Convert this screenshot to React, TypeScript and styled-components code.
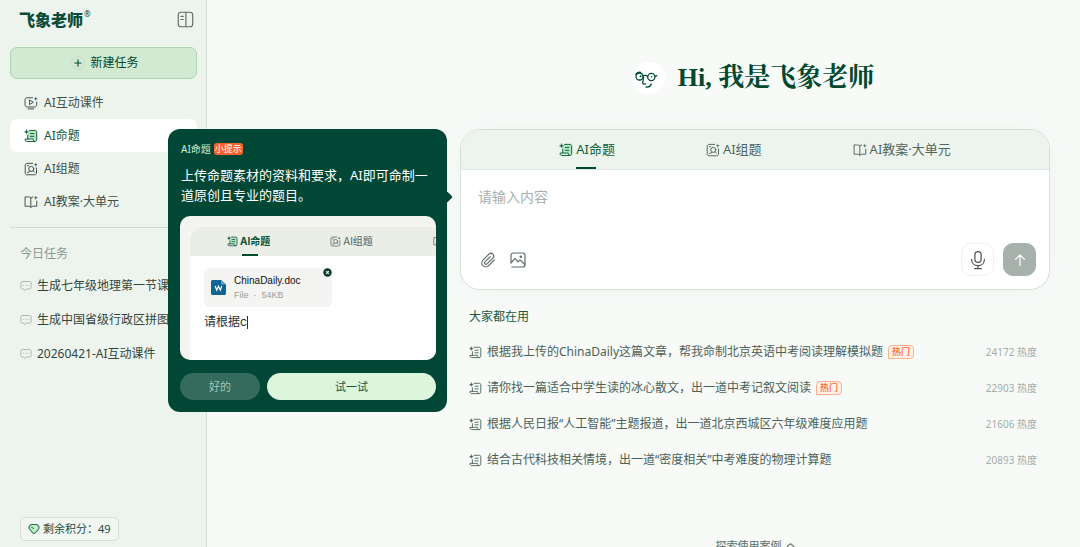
import React from "react";
import styled, { createGlobalStyle, css } from "styled-components";

const sans = `"Noto Sans", "Noto Sans CJK SC", sans-serif`;
const green = "#00492f";

const GlobalStyle = createGlobalStyle`
  *, *::before, *::after { box-sizing: border-box; }
  body {
    margin: 0;
    font-family: ${sans};
    font-size: 12px;
    line-height: 16px;
    color: #3d4f48;
    background: #f8faf8;
  }
  button, textarea { font: inherit; color: inherit; margin: 0; padding: 0; border: 0; background: none; }
  button { cursor: pointer; }
  a { color: inherit; text-decoration: none; }
  ul { list-style: none; margin: 0; padding: 0; }
  h1, h2, p { margin: 0; font-weight: 400; }
  svg { display: block; flex: none; }
`;

const Page = styled.div`
  position: relative;
  display: flex;
  height: 100vh;
  overflow: hidden;
`;

/* ---------- sidebar ---------- */

const Sidebar = styled.aside`
  flex: none;
  display: flex;
  flex-direction: column;
  width: 207px;
  padding: 0 9px 6px 10px;
  background: #edf4ee;
  border-right: 1px solid #d3ddd6;
`;

const Brand = styled.div`
  display: flex;
  align-items: center;
  justify-content: space-between;
  height: 47px;
  padding: 0 3px 8px 9px;
  color: #0b4c3a;
`;

const BrandName = styled.span`
  display: flex;
  font-size: 16px;
  font-weight: 900;
  line-height: 24px;

  sup {
    font-size: 8px;
    font-weight: 400;
    line-height: 12px;
    margin-left: 1px;
  }
`;

const IconButton = styled.button`
  display: flex;
  color: #5f6f68;
`;

const NewTask = styled.button`
  display: flex;
  align-items: center;
  justify-content: center;
  gap: 5px;
  height: 32px;
  margin-bottom: 7px;
  padding-left: 3px;
  border: 1px solid #afd2b5;
  border-radius: 7px;
  background: #d3ead2;
  color: ${green};
`;

const PlusRing = styled.span`
  display: flex;
  padding: 1px;
  border: 1px solid #c6e0c6;
  border-radius: 50%;
`;

const NavItem = styled.a<{ $active?: boolean }>`
  display: flex;
  align-items: center;
  gap: 6px;
  height: 33px;
  padding-left: 14px;
  border-radius: 7px;
  color: #3d4f48;
  ${(p) => p.$active && css`background: #fff; color: #0b5a3c;`}
`;

const Rule = styled.hr`
  width: 100%;
  height: 1px;
  margin: 9px 0 18px;
  border: 0;
  background: #d0d9d3;
`;

const TaskHeading = styled.h2`
  padding-left: 10px;
  margin-bottom: 7px;
  font-size: 12px;
  color: #8a9a93;
`;

const TaskItem = styled.a`
  display: flex;
  align-items: center;
  gap: 5px;
  height: 34px;
  padding-left: 10px;
  white-space: nowrap;
  overflow: hidden;
  color: #33463e;

  svg { color: #a9b7b0; }
`;

const Credits = styled.a`
  display: flex;
  align-items: center;
  align-self: flex-start;
  gap: 3px;
  height: 24px;
  margin: auto 0 0 10px;
  padding: 0 7px;
  border: 1px solid #d5dfd8;
  border-radius: 5px;
  background: #f1f6f2;
  font-size: 11px;
  color: #1f4c3e;
`;

/* ---------- main column ---------- */

const Main = styled.main`
  flex: 1;
  min-width: 0;
  display: flex;
  flex-direction: column;
  padding: 60px 30px 0 253px;
`;

const Greeting = styled.div`
  flex: none;
  display: flex;
  align-items: center;
  justify-content: center;
  gap: 13px;
  height: 36px;
  margin-bottom: 33px;
  padding-right: 3px;
`;

const Avatar = styled.span`
  display: flex;
  border-radius: 50%;
  background: #fff;
  color: ${green};
`;

const Title = styled.h1`
  font-family: "Liberation Serif", "Noto Serif CJK SC", "Noto Sans CJK SC", serif;
  font-size: 26px;
  line-height: 36px;
  font-weight: 700;
  color: ${green};
`;

const Composer = styled.section`
  flex: none;
  display: flex;
  flex-direction: column;
  border: 1px solid #d6e1d9;
  border-radius: 20px;
  background: #fff;
  overflow: hidden;
  box-shadow: 0 0 20px #eef5f0;
`;

const TabBar = styled.div`
  display: flex;
  justify-content: center;
  gap: 91px;
  height: 40px;
  border-bottom: 1px solid #dfe7e1;
  background: #edf4ee;
`;

const Tab = styled.button<{ $active?: boolean }>`
  display: flex;
  align-items: center;
  gap: 3px;
  font-size: 13px;
  color: ${(p) => (p.$active ? "#0d6241" : "#52665e")};
`;

const TabLabel = styled.span<{ $active?: boolean }>`
  position: relative;
  line-height: 39px;
  ${(p) =>
    p.$active &&
    css`
      &::after {
        content: "";
        position: absolute;
        left: 0;
        bottom: 0;
        width: 20px;
        height: 2px;
        background: ${green};
      }
    `}
`;

const Prompt = styled.textarea`
  height: 73px;
  padding: 17px 17px 0;
  font-size: 14px;
  line-height: 20px;
  resize: none;
  outline: none;

  &::placeholder { color: #a9b1ad; opacity: 1; }
`;

const Toolbar = styled.div`
  display: flex;
  align-items: center;
  gap: 14px;
  padding: 0 13px 13px 19px;
  color: #66736d;
`;

const SquareButton = styled.button<{ $filled?: boolean }>`
  display: flex;
  align-items: center;
  justify-content: center;
  width: 33px;
  height: 33px;
  border: 1px solid ${(p) => (p.$filled ? "#a6b1ac" : "#eef1ef")};
  border-radius: 10px;
  background: ${(p) => (p.$filled ? "#a6b1ac" : "#fff")};
  color: ${(p) => (p.$filled ? "#fff" : "#4d5853")};
`;

const SendGroup = styled.div`
  display: flex;
  gap: 9px;
  margin-left: auto;
`;

const Popular = styled.section`
  padding: 19px 13px 0 9px;
`;

const PopularHeading = styled.h2`
  margin-bottom: 9px;
  font-size: 12px;
  color: #17573f;
`;

const PopularRow = styled.a`
  display: flex;
  align-items: center;
  gap: 5px;
  height: 36px;
  white-space: nowrap;
  color: #4a6258;
`;

const HotBadge = styled.span`
  padding: 0 3px;
  border: 1px solid #ffae8e;
  border-radius: 4px 4px 4px 0;
  background: #fff1ea;
  font-size: 9px;
  line-height: 12px;
  font-weight: 500;
  color: #f9621f;
`;

const Heat = styled.span`
  margin-left: auto;
  font-size: 10px;
  color: #a3ada8;
`;

const Explore = styled.a`
  display: flex;
  align-items: center;
  align-self: center;
  gap: 4px;
  margin-top: 60px;
  font-size: 11px;
  color: #5b6f66;
`;

/* ---------- tip popover ---------- */

const Popover = styled.div`
  position: absolute;
  left: 168px;
  top: 129px;
  width: 279px;
  padding: 13px 11px 12px 12px;
  border-radius: 12px;
  background: #004735;
  color: #fff;

  &::after {
    content: "";
    position: absolute;
    right: -4px;
    top: 64px;
    width: 8px;
    height: 8px;
    border-radius: 1px;
    background: #004735;
    transform: rotate(45deg);
  }
`;

const TipHeading = styled.div`
  display: flex;
  align-items: center;
  gap: 3px;
  padding-left: 1px;
  font-size: 10px;
  line-height: 14px;
  color: #cdebcf;
`;

const TipBadge = styled.span`
  padding: 0 1px;
  border-radius: 3px;
  background: #f9622b;
  font-size: 9px;
  line-height: 12px;
  color: #fff;
`;

const TipText = styled.p`
  padding: 9px 0 11px 1px;
  font-size: 13px;
  line-height: 20px;
  white-space: nowrap;
`;

const Preview = styled.div`
  height: 144px;
  padding: 11px 0 0 10px;
  border-radius: 10px;
  background: #f4f5f1;
  color: #2b302e;
  overflow: hidden;
  font-family: Inter, "Noto Sans CJK SC", sans-serif;
`;

const PreviewCard = styled.div`
  height: 100%;
  border-radius: 12px 0 0 0;
  background: #fdfefd;
  overflow: hidden;
`;

const PreviewTabs = styled.div`
  display: flex;
  gap: 60px;
  height: 29px;
  padding-left: 37px;
  background: #eaeee7;
`;

const PreviewTab = styled.span<{ $active?: boolean }>`
  flex: none;
  display: flex;
  align-items: center;
  gap: 2px;
  font-size: 10px;
  color: #53635b;
  ${(p) => p.$active && css`color: #0b5138; font-weight: 700;`}

  ${TabLabel} { line-height: 29px; }
  ${TabLabel}::after { left: 2px; width: 16px; }
`;

const FileChip = styled.div`
  position: relative;
  display: flex;
  align-items: center;
  gap: 8px;
  width: 128px;
  height: 39px;
  margin: 12px 0 6px 14px;
  padding-left: 7px;
  border-radius: 6px;
  background: #f4f4f2;
`;

const FileClose = styled.span`
  position: absolute;
  top: 0;
  right: 0;
`;

const FileName = styled.div`
  font-family: "Liberation Sans", sans-serif;
  font-size: 10px;
  line-height: 14px;
  color: #111;
`;

const FileMeta = styled.div`
  font-family: "Liberation Sans", sans-serif;
  font-size: 9px;
  line-height: 14px;
  color: #9a9d9b;
`;

const Typed = styled.div`
  display: flex;
  align-items: center;
  padding-left: 14px;
  font-size: 12px;
  line-height: 18px;
`;

const Caret = styled.span`
  width: 1px;
  height: 13px;
  background: #2b302e;
`;

const TipActions = styled.div`
  display: flex;
  gap: 7px;
  margin-top: 13px;
`;

const TipButton = styled.button<{ $primary?: boolean }>`
  flex: ${(p) => (p.$primary ? "1" : "0 0 80px")};
  height: 27px;
  border-radius: 14px;
  font-size: 11px;
  background: ${(p) => (p.$primary ? "#dcf5dd" : "#356b5c")};
  color: ${(p) => (p.$primary ? "#1d5843" : "#a5c4b7")};
`;

/* ---------- icons ---------- */

type IconProps = { size?: number; tint?: string };

const Svg = ({ size = 14, w = 1.1, children }: { size?: number; w?: number; children: React.ReactNode }) => (
  <svg width={size} height={size} viewBox="0 0 16 16" fill="none" stroke="currentColor" strokeWidth={w} strokeLinecap="round" strokeLinejoin="round" aria-hidden="true">
    {children}
  </svg>
);

const ScrollIcon = ({ size, tint = "none" }: IconProps) => (
  <Svg size={size}>
    <path d="M4.200 7v4.500h6.500c0 1.800.8 2.800 1.900 2.800s1.900-1 1.900-2.400V3.300c0-1-.7-1.700-1.700-1.700H6.300L4.200 5z" fill={tint} stroke="none" />
    <path d="M4.200 7v4.500M6.300 1.600h6.300c1.200 0 1.900.7 1.900 1.900v8.700c0 1.300-.8 2.100-2 2.100H3.400C2 14.300 1.200 13.200 1.200 11.500h9.300c0 1.700.7 2.800 2 2.800M7.300 5.200h4M7.300 8.400h4" />
    <path d="M2.900.8l.7 1.700 1.700.7-1.700.7-.7 1.700-.7-1.700-1.700-.7 1.700-.7z" fill="currentColor" strokeWidth=".4" />
  </Svg>
);

const spark = <path d="M13.500.6l.6 1.900 1.900.6-1.900.6-.6 1.900-.6-1.900-1.900-.6 1.900-.6z" fill="currentColor" stroke="none" />;

const CoursewareIcon = () => (
  <Svg>
    <path d="M9.800 2H3.500C2.200 2 1.200 3 1.200 4.300v5.900c0 1.300 1 2.300 2.300 2.300h8.700c1.300 0 2.300-1 2.300-2.300V7M4.700 14.700h6.300M6.300 5v4.800l4-2.400z" />
    {spark}
  </Svg>
);

const GroupIcon = ({ size }: IconProps) => (
  <Svg size={size}>
    <path d="M9.800 1.600H3.400c-1.100 0-2 .9-2 2v9c0 1.100.9 2 2 2h8.900c1.100 0 2-.9 2-2V6.800M3.800 11.800h1.700L6.600 10.300M3.800 4.200h1.400" />
    <circle cx="8.300" cy="7.900" r="2.900" />
    <path d="M10.400 10.100l1.700 1.700" />
    {spark}
  </Svg>
);

const BookIcon = ({ size }: IconProps) => (
  <Svg size={size}>
    <path d="M7.800 3.300C6.900 2.400 5.700 2.200 4 2.200H1.200v10.600h3.600c1.200 0 2.300.3 3 1.200.7-.9 1.800-1.200 3-1.200h3.800V7M7.800 3.300V14M7.800 3.300c.6-.7 1.300-1 2.200-1.100" />
    {spark}
  </Svg>
);

const ChatIcon = () => (
  <Svg size={12} w={1.3}>
    <path d="M3.200 2h9.600c1.200 0 2 .8 2 2v6c0 1.200-.8 2-2 2H8.500l-2.300 2-1.600-2H3.200c-1.200 0-2-.8-2-2V4c0-1.200.8-2 2-2zM4.800 7.200h.2M8 7.200h.2M11.200 7.200h.2" />
  </Svg>
);

const PanelIcon = () => (
  <Svg size={17}>
    <rect x="1.200" y="1.200" width="13.600" height="13.600" rx="2.600" />
    <path d="M8.400 1.200v13.600M3.700 5h2.200M3.700 8h2.200" />
  </Svg>
);

const PlusIcon = () => (
  <Svg size={10} w={1.7}>
    <path d="M8 3v10M3 8h10" />
  </Svg>
);

const LeafIcon = () => (
  <Svg size={12} w={1.4}>
    <path d="M5 2h6c1 0 1.700.4 2.300 1.200l1.100 1.700c.6 1 .5 1.900-.2 2.800l-4.600 5.600c-1 1.100-2.300 1.100-3.200 0L1.800 7.700c-.7-.9-.8-1.800-.2-2.800l1.100-1.700C3.300 2.400 4 2 5 2z" fill="#c4f0c8" stroke="#28704f" />
    <path d="M4.800 5.600l2.200 1.600" stroke="#28704f" />
  </Svg>
);

const FaceIcon = () => (
  <svg width="32" height="32" viewBox="0 0 32 32" fill="none" stroke="currentColor" strokeWidth="1.300" strokeLinecap="round" strokeLinejoin="round" aria-hidden="true">
    <circle cx="6.500" cy="14.500" r="3.500" />
    <circle cx="18.300" cy="15" r="3.600" />
    <path d="M2.800 12.300c1-1.800 3-2.500 4.800-2M10 14c1.500-1 3-.8 4.700.3M21.900 14.300l1.900-.7M10.600 15.500l-.9 5.500c0 .9 1.400 1.100 2.700 1M13 25c2.600.4 4.500-.9 5.300-3" />
    <circle cx="7.600" cy="14.200" r="1" fill="currentColor" stroke="none" />
    <circle cx="18.600" cy="14.800" r=".7" fill="currentColor" stroke="none" />
  </svg>
);

const ClipIcon = () => (
  <Svg size={16} w={1.2}>
    <path d="M14.300 8l-5.700 5.700a3.900 3.900 0 0 1-5.600-5.600l5.900-5.900a2.700 2.700 0 0 1 3.900 3.900L7 11.900a1.400 1.400 0 0 1-2-2l5.200-5.200" />
  </Svg>
);

const ImageIcon = () => (
  <Svg size={16} w={1.2}>
    <path d="M1 10V3.300C1 2 2 1 3.300 1h9.400C14 1 15 2 15 3.300v9.400c0 1.300-1 2.300-2.300 2.300H1.800" />
    <path d="M1 11l4-4.600 3 3.500 2-2 4.800 4.600" />
    <circle cx="10.800" cy="4.800" r=".7" fill="currentColor" />
  </Svg>
);

const MicIcon = () => (
  <Svg size={20} w={1}>
    <rect x="5.500" y="1.200" width="5" height="8.600" rx="2.500" />
    <path d="M2.900 7.500c0 3 2.100 5 5.100 5s5.100-2 5.100-5M8 12.500v2.300M5.300 14.800h5.400" />
  </Svg>
);

const UpIcon = () => (
  <Svg size={16} w={1.2}>
    <path d="M8 13.500V3M3.500 7.300L8 2.800l4.500 4.500" />
  </Svg>
);

const DoubleUpIcon = () => (
  <Svg size={9} w={1.8}>
    <path d="M2 8l6-5 6 5M4 13l4-3.500 4 3.500" />
  </Svg>
);

const WordIcon = () => (
  <svg width="15" height="15" viewBox="0 0 15 15" aria-hidden="true">
    <path d="M1.500 0H10l5 4.500v9c0 .8-.7 1.500-1.500 1.500h-12C.7 15 0 14.300 0 13.500v-12C0 .7.7 0 1.500 0z" fill="#0d6596" />
    <path d="M10 0l5 4.500h-5z" fill="#5ba3c6" />
    <path d="M4.200 6l1.500 4.200L7.500 6.300l1.800 3.900L10.800 6" fill="none" stroke="#fff" strokeWidth="1.200" />
  </svg>
);

const CloseIcon = () => (
  <svg width="9" height="9" viewBox="0 0 9 9" aria-hidden="true">
    <circle cx="4.500" cy="4.500" r="4.200" fill="#0b3d2c" />
    <path d="M3.200 3.200l2.600 2.600M5.800 3.200L3.200 5.800" stroke="#fff" strokeWidth="1.100" />
  </svg>
);

/* ---------- data ---------- */

const tint = "#b4e6bd";

const nav = [
  { label: "AI互动课件", icon: <CoursewareIcon /> },
  { label: "AI命题", icon: <ScrollIcon tint={tint} />, active: true },
  { label: "AI组题", icon: <GroupIcon /> },
  { label: "AI教案·大单元", icon: <BookIcon /> },
];

const tasks = ["生成七年级地理第一节课件", "生成中国省级行政区拼图", "20260421-AI互动课件"];

const popular = [
  { text: "根据我上传的ChinaDaily这篇文章，帮我命制北京英语中考阅读理解模拟题", heat: 24172, hot: true },
  { text: "请你找一篇适合中学生读的冰心散文，出一道中考记叙文阅读", heat: 22903, hot: true },
  { text: "根据人民日报“人工智能”主题报道，出一道北京西城区六年级难度应用题", heat: 21606 },
  { text: "结合古代科技相关情境，出一道“密度相关”中考难度的物理计算题", heat: 20893 },
];

export default function App() {
  return (
    <>
      <GlobalStyle />
      <Page lang="zh-CN">
        <Sidebar>
          <Brand>
            <BrandName>
              飞象老师<sup>®</sup>
            </BrandName>
            <IconButton aria-label="收起侧栏">
              <PanelIcon />
            </IconButton>
          </Brand>
          <NewTask>
            <PlusRing>
              <PlusIcon />
            </PlusRing>
            新建任务
          </NewTask>
          <nav>
            {nav.map((n) => (
              <NavItem key={n.label} href="#" $active={n.active}>
                {n.icon}
                {n.label}
              </NavItem>
            ))}
          </nav>
          <Rule />
          <TaskHeading>今日任务</TaskHeading>
          <ul>
            {tasks.map((t) => (
              <li key={t}>
                <TaskItem href="#">
                  <ChatIcon />
                  {t}
                </TaskItem>
              </li>
            ))}
          </ul>
          <Credits href="#">
            <LeafIcon />
            剩余积分：49
          </Credits>
        </Sidebar>

        <Main>
          <Greeting>
            <Avatar>
              <FaceIcon />
            </Avatar>
            <Title>Hi, 我是飞象老师</Title>
          </Greeting>

          <Composer>
            <TabBar role="tablist">
              {nav.slice(1).map((n) => (
                <Tab key={n.label} role="tab" aria-selected={!!n.active} $active={n.active}>
                  {n.icon}
                  <TabLabel $active={n.active}>{n.label}</TabLabel>
                </Tab>
              ))}
            </TabBar>
            <Prompt aria-label="内容" placeholder="请输入内容" />
            <Toolbar>
              <IconButton aria-label="上传附件">
                <ClipIcon />
              </IconButton>
              <IconButton aria-label="上传图片">
                <ImageIcon />
              </IconButton>
              <SendGroup>
                <SquareButton aria-label="语音输入">
                  <MicIcon />
                </SquareButton>
                <SquareButton aria-label="发送" $filled>
                  <UpIcon />
                </SquareButton>
              </SendGroup>
            </Toolbar>
          </Composer>

          <Popular>
            <PopularHeading>大家都在用</PopularHeading>
            <ul>
              {popular.map((p) => (
                <li key={p.heat}>
                  <PopularRow href="#">
                    <ScrollIcon size={13} />
                    {p.text}
                    {p.hot && <HotBadge>热门</HotBadge>}
                    <Heat>{p.heat} 热度</Heat>
                  </PopularRow>
                </li>
              ))}
            </ul>
          </Popular>

          <Explore href="#">
            探索使用案例
            <DoubleUpIcon />
          </Explore>
        </Main>

        <Popover role="dialog" aria-label="AI命题小提示">
          <TipHeading>
            AI命题<TipBadge>小提示</TipBadge>
          </TipHeading>
          <TipText>
            上传命题素材的资料和要求，AI即可命制一
            <br />
            道原创且专业的题目。
          </TipText>
          <Preview>
            <PreviewCard>
              <PreviewTabs>
                <PreviewTab $active>
                  <ScrollIcon size={11} tint={tint} />
                  <TabLabel $active>AI命题</TabLabel>
                </PreviewTab>
                <PreviewTab>
                  <GroupIcon size={11} />
                  <TabLabel>AI组题</TabLabel>
                </PreviewTab>
                <PreviewTab>
                  <BookIcon size={11} />
                </PreviewTab>
              </PreviewTabs>
              <FileChip>
                <WordIcon />
                <div>
                  <FileName>ChinaDaily.doc</FileName>
                  <FileMeta>File&nbsp; ·&nbsp; 54KB</FileMeta>
                </div>
                <FileClose>
                  <CloseIcon />
                </FileClose>
              </FileChip>
              <Typed>
                请根据c
                <Caret />
              </Typed>
            </PreviewCard>
          </Preview>
          <TipActions>
            <TipButton>好的</TipButton>
            <TipButton $primary>试一试</TipButton>
          </TipActions>
        </Popover>
      </Page>
    </>
  );
}
